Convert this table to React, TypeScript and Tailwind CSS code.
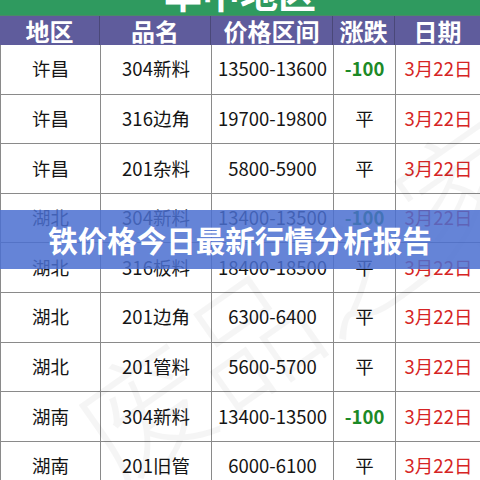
const rows = [
  ['许昌', '304新料', '13500-13600', '-100', '3月22日'],
  ['许昌', '316边角', '19700-19800', '平', '3月22日'],
  ['许昌', '201杂料', '5800-5900', '平', '3月22日'],
  ['湖北', '304新料', '13400-13500', '-100', '3月22日'],
  ['湖北', '316板料', '18400-18500', '平', '3月22日'],
  ['湖北', '201边角', '6300-6400', '平', '3月22日'],
  ['湖北', '201管料', '5600-5700', '平', '3月22日'],
  ['湖南', '304新料', '13400-13500', '-100', '3月22日'],
  ['湖南', '201旧管', '6000-6100', '平', '3月22日']
];

const headers = ['地区', '品名', '价格区间', '涨跌', '日期'];

const cols = 'grid grid-cols-[100px_111px_122px_62px_85px]';

const App = () => {
  return (
    <div
      className="relative w-[480px] h-[480px] overflow-hidden bg-white"
      style={{ fontFamily: '"Noto Sans CJK SC", "Noto Sans", sans-serif' }}
    >
      {/* 标题栏 (上半部分被裁掉) */}
      <div className="relative h-[16px] bg-[#2f9a5f] overflow-hidden border-b border-[#4a8a66]">
        <div className="absolute left-0 right-0 -top-[30px] text-center text-[38px] leading-[44px] font-bold text-white">
          华中地区
        </div>
      </div>

      {/* 表头 */}
      <div className={`${cols} h-[29px] bg-[#5f5c9c] text-white text-[24px] font-bold leading-[29px]`}>
        {headers.map((h, i) => (
          <div
            key={h}
            className={`text-center ${i < 4 ? 'border-r border-[#4a4878]' : ''}`}
          >
            {h}
          </div>
        ))}
      </div>

      {/* 表格 */}
      <div className="border-l border-[#8a8a8a]">
        {rows.map((r, ri) => (
          <div key={ri} className={`${cols} h-[49.6px] border-b border-[#8a8a8a] text-[18.5px] text-[#151515]`}>
            {r.map((c, ci) => (
              <div
                key={ci}
                className={`flex items-center justify-center ${ci < 4 ? 'border-r border-[#8a8a8a]' : ''} ${
                  ci === 3 && c === '-100' ? 'font-bold text-[#1c8a26]' : ''
                } ${ci === 4 ? 'text-[#d62424]' : ''}`}
              >
                {c}
              </div>
            ))}
          </div>
        ))}
      </div>

      {/* 水印 */}
      <div className="absolute left-[40px] top-[230px] -rotate-[35deg] text-[130px] font-light text-black/[0.04] whitespace-nowrap pointer-events-none leading-none">
        废品之家
      </div>

      {/* 蓝色横幅 */}
      <div className="absolute left-0 right-0 top-[210px] h-[59px] bg-[#4a6ed0]/85 flex items-center justify-center">
        <span className="text-white text-[29.5px] font-bold">铁价格今日最新行情分析报告</span>
      </div>
    </div>
  );
};

export default App;
